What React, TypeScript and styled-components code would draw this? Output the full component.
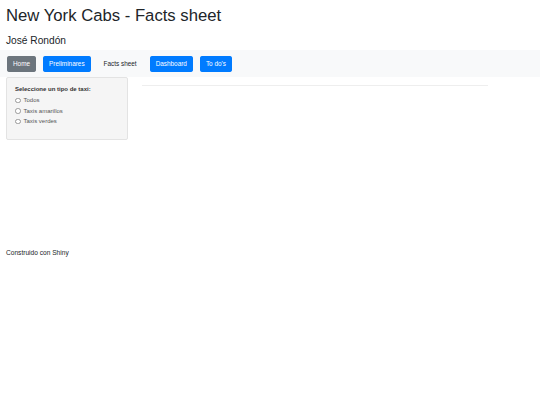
import React from "react";
import styled, { createGlobalStyle } from "styled-components";

const Global = createGlobalStyle`
  html, body { margin: 0; padding: 0; background: #fff; }
  body {
    font-family: "Liberation Sans", Arial, Helvetica, sans-serif;
    color: #212529;
    font-size: 6.6px;
    line-height: 1.5;
  }
  * { box-sizing: border-box; }
`;

const Page = styled.div`
  display: flex;
  flex-direction: column;
`;

const Header = styled.header`
  padding: 6px 6px 0 6px;
`;

const Title = styled.h1`
  margin: 0;
  font-size: 16.7px;
  font-weight: 400;
  line-height: 1.2;
  color: #212529;
`;

const Subtitle = styled.h4`
  margin: 9px 0 0 0;
  font-size: 10.2px;
  font-weight: 400;
  line-height: 1.2;
  color: #212529;
`;

const NavBar = styled.nav`
  margin-top: 3px;
  height: 27px;
  background: #f8f9fa;
  display: flex;
  align-items: center;
  gap: 7px;
  padding: 0 7px;
`;

const NavButton = styled.button<{ $variant: "secondary" | "primary" | "link" }>`
  height: 16px;
  padding: 0 5px;
  border-radius: 1.7px;
  font-family: inherit;
  font-size: 6.4px;
  line-height: 1;
  cursor: pointer;
  border: 1px solid
    ${(p) =>
      p.$variant === "secondary" ? "#6c757d" : p.$variant === "primary" ? "#007bff" : "transparent"};
  background: ${(p) =>
    p.$variant === "secondary" ? "#6c757d" : p.$variant === "primary" ? "#007bff" : "transparent"};
  color: ${(p) => (p.$variant === "link" ? "#212529" : "#fff")};
`;

const Body = styled.div`
  display: flex;
  align-items: flex-start;
  padding: 0 6px;
  gap: 14px;
`;

const Sidebar = styled.div`
  width: 122px;
  height: 63px;
  background: #f5f5f5;
  border: 1px solid #e3e3e3;
  border-radius: 2px;
  padding: 6px 8px;
  display: flex;
  flex-direction: column;
`;

const Label = styled.div`
  font-weight: 700;
  font-size: 6px;
  line-height: 10px;
  color: #333;
  margin-bottom: 1px;
`;

const RadioRow = styled.label`
  display: flex;
  align-items: center;
  gap: 3px;
  height: 10.5px;
  font-size: 6px;
  color: #555;
`;

const Radio = styled.span`
  width: 5.5px;
  height: 5.5px;
  border-radius: 50%;
  border: 0.7px solid #999;
  background: #fff;
`;

const Main = styled.div`
  flex: 0 0 346px;
  padding-top: 8px;
`;

const Rule = styled.hr`
  margin: 0;
  border: 0;
  border-top: 1px solid #eeeeee;
`;

const Footer = styled.footer`
  margin-top: 108px;
  padding-left: 6px;
  font-size: 6.6px;
  line-height: 10px;
  color: #212529;
`;

const options = ["Todos", "Taxis amarillos", "Taxis verdes"];

export default function App() {
  return (
    <Page>
      <Global />
      <Header>
        <Title>New York Cabs - Facts sheet</Title>
        <Subtitle>José Rondón</Subtitle>
      </Header>
      <NavBar>
        <NavButton $variant="secondary">Home</NavButton>
        <NavButton $variant="primary">Preliminares</NavButton>
        <NavButton $variant="link">Facts sheet</NavButton>
        <NavButton $variant="primary">Dashboard</NavButton>
        <NavButton $variant="primary">To do's</NavButton>
      </NavBar>
      <Body>
        <Sidebar>
          <Label>Seleccione un tipo de taxi:</Label>
          {options.map((o) => (
            <RadioRow key={o}>
              <Radio />
              {o}
            </RadioRow>
          ))}
        </Sidebar>
        <Main>
          <Rule />
        </Main>
      </Body>
      <Footer>Construido con Shiny</Footer>
    </Page>
  );
}
